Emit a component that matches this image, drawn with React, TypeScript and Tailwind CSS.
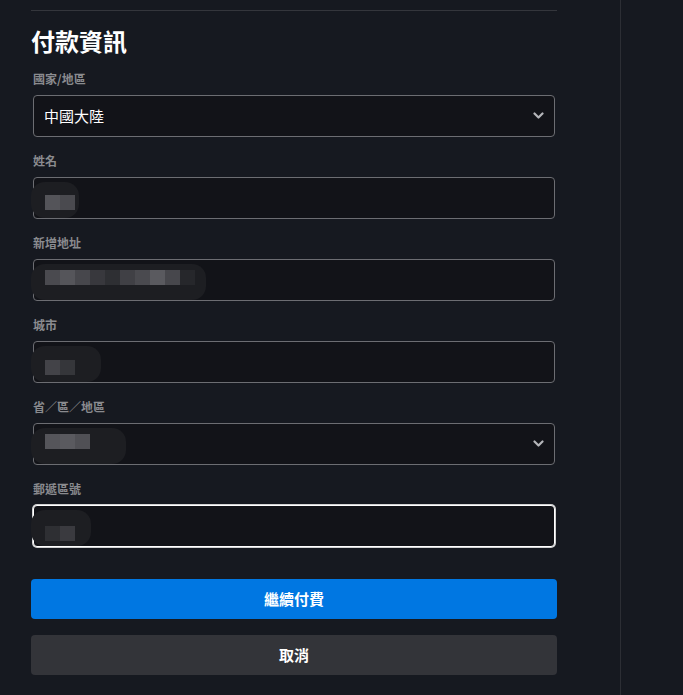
import { ReactNode } from "react";

const font = { fontFamily: '"Noto Sans CJK TC", "Noto Sans", sans-serif' };

// censored value: a rough blob with a row of grey mosaic blocks
function Mosaic({ blocks, top, blobW }: { blocks: string[]; top: number; blobW: number }) {
  return (
    <div className="pointer-events-none absolute -left-[3px] top-[2px] h-[40px]">
      <div className="absolute left-0 top-[2px] h-[36px] rounded-[14px] bg-[#1d1e22]" style={{ width: blobW }} />
      <div className="absolute left-[14px] flex" style={{ top }}>
        {blocks.map((c, i) => (
          <div key={i} className="h-[15px] w-[15px]" style={{ backgroundColor: c }} />
        ))}
      </div>
    </div>
  );
}

function Field({
  label,
  children,
  select,
  focused,
}: {
  label: string;
  children?: ReactNode;
  select?: boolean;
  focused?: boolean;
}) {
  return (
    <div className="flex flex-col">
      <label className="mb-2 ml-[2px] text-[12px] leading-4 font-bold text-[#8a8b8f]">{label}</label>
      <div
        className={
          "relative ml-[2px] flex h-[42px] w-[522px] items-center rounded-[4px] border bg-[#121318] pl-[10px] pr-3 " +
          (focused ? "border-white ring-1 ring-white/80" : "border-[#6c6d72]")
        }
      >
        <div className="flex-1 text-[15px] text-white">{children}</div>
        {select && (
          <svg width="11" height="8" viewBox="0 0 11 8" className="mr-[-2px]">
            <path d="M1.5 1.5 L5.5 5.5 L9.5 1.5" fill="none" stroke="#b5b6ba" strokeWidth="2.2" strokeLinecap="round" strokeLinejoin="round" />
          </svg>
        )}
      </div>
    </div>
  );
}

export default function App() {
  return (
    <div className="flex h-[695px] w-full overflow-hidden bg-[#161920]" style={font}>
      <div className="w-[621px] shrink-0 border-r border-[#2c2e34] pl-[31px]">
        <div className="mt-[10px] h-px w-[526px] bg-[#34363c]" />
        <h1 className="mt-[14px] text-[24px] leading-8 font-bold text-white">付款資訊</h1>

        <div className="mt-[14px] flex flex-col gap-4">
          <Field label="國家/地區" select>
            中國大陸
          </Field>
          <Field label="姓名">
            <Mosaic blocks={["#545459", "#4a4a4f"]} top={15} blobW={48} />
          </Field>
          <Field label="新增地址">
            <Mosaic
              blocks={["#4a4a4f", "#55555a", "#47474c", "#38383d", "#2e2f33", "#404045", "#4a4a4f", "#5a5a5f", "#47474c", "#26272b"]}
              top={8}
              blobW={175}
            />
          </Field>
          <Field label="城市">
            <Mosaic blocks={["#434348", "#35363a"]} top={16} blobW={70} />
          </Field>
          <Field label="省／區／地區" select>
            <Mosaic blocks={["#55555a", "#5a5a5f", "#505055"]} top={8} blobW={95} />
          </Field>
          <Field label="郵遞區號" focused>
            <Mosaic blocks={["#2e2f33", "#3a3a3f"]} top={18} blobW={60} />
          </Field>
        </div>

        <div className="mt-8 flex w-[526px] flex-col gap-4">
          <button className="h-10 rounded-[4px] bg-[#0077e2] text-[15px] font-bold text-white">繼續付費</button>
          <button className="h-10 rounded-[4px] bg-[#333439] text-[15px] font-bold text-white">取消</button>
        </div>
      </div>
      <div className="flex-1" />
    </div>
  );
}
